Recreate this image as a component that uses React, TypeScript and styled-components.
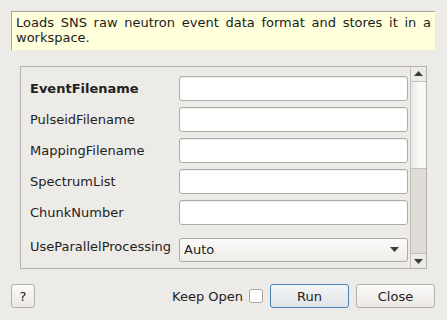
import styled, { createGlobalStyle } from 'styled-components';

const GlobalStyle = createGlobalStyle`
  body {
    margin: 0;
    background: #edebe7;
    font-family: 'DejaVu Sans', 'Liberation Sans', sans-serif;
    font-size: 13px;
    color: #1c1c1c;
  }
`;

const Dialog = styled.div`
  width: 447px;
  height: 320px;
  box-sizing: border-box;
  padding: 11px 12px 12px 11px;
  display: flex;
  flex-direction: column;
  background: #edebe7;
`;

const Description = styled.div`
  height: 39px;
  box-sizing: border-box;
  background: #ffffdc;
  border-top: 1px solid #a8a6a2;
  border-left: 1px solid #a8a6a2;
  padding: 3px 4px 0 4px;
  line-height: 15px;
  text-align: justify;
`;

const Frame = styled.div`
  margin: 16px 8px 0 9px;
  height: 204px;
  box-sizing: border-box;
  border: 1px solid #b5b2ad;
  display: flex;
`;

const Form = styled.div`
  flex: 1;
  display: grid;
  grid-template-columns: 149px 1fr;
  grid-auto-rows: 25px;
  row-gap: 6px;
  padding: 9px 2px 0 9px;
  align-content: start;
`;

const Label = styled.div<{ $bold?: boolean; $gap?: boolean }>`
  display: flex;
  align-items: center;
  font-weight: ${(p) => (p.$bold ? 'bold' : 'normal')};
  margin-top: ${(p) => (p.$gap ? '7px' : '0')};
  color: #222;
`;

const TextBox = styled.div`
  border: 1px solid #aeaba6;
  border-radius: 3px;
  background: #fff;
  box-shadow: inset 0 1px 0 #f0efed;
`;

const Combo = styled.div`
  margin-top: 7px;
  height: 24px;
  box-sizing: border-box;
  border: 1px solid #aeaba6;
  border-radius: 3px;
  background: linear-gradient(#fbfaf9, #efede9);
  display: flex;
  align-items: center;
  justify-content: space-between;
  padding: 0 8px 0 4px;
`;

const Arrow = styled.svg`
  display: block;
`;

const ScrollBar = styled.div`
  width: 15px;
  display: flex;
  flex-direction: column;
  border-left: 1px solid #c3c0bb;
  background: #e0ddd8;
`;

const ScrollButton = styled.div`
  height: 14px;
  display: flex;
  align-items: center;
  justify-content: center;
  background: #edebe7;
  border-bottom: 1px solid #c3c0bb;
  &:last-child {
    border-bottom: none;
    border-top: 1px solid #c3c0bb;
    margin-top: auto;
  }
`;

const Handle = styled.div`
  height: 86px;
  background: linear-gradient(90deg, #e9e7e4, #fbfbfa 60%, #f6f5f3);
  border-bottom: 1px solid #c3c0bb;
`;

const Footer = styled.div`
  margin-top: 15px;
  display: flex;
  align-items: center;
  height: 24px;
  gap: 7px;
`;

const Button = styled.div<{ $primary?: boolean; $w: number }>`
  width: ${(p) => p.$w}px;
  height: 24px;
  box-sizing: border-box;
  border: 1px solid ${(p) => (p.$primary ? '#4a83b4' : '#b3afaa')};
  border-radius: 3px;
  background: ${(p) =>
    p.$primary ? 'linear-gradient(#f3f5f7, #dfe4e8)' : 'linear-gradient(#fbfaf9, #ebe8e4)'};
  display: flex;
  align-items: center;
  justify-content: center;
  color: #222;
`;

const Spacer = styled.div`
  flex: 1;
`;

const KeepOpen = styled.div`
  display: flex;
  align-items: center;
  color: #222;
`;

const Check = styled.div`
  width: 14px;
  height: 14px;
  box-sizing: border-box;
  border: 1px solid #aeaba6;
  border-radius: 2px;
  background: #fff;
  margin-left: 6px;
`;

const fields = ['PulseidFilename', 'MappingFilename', 'SpectrumList', 'ChunkNumber'];

const Tri = ({ up }: { up?: boolean }) => (
  <Arrow width='9' height='5' viewBox='0 0 9 5'>
    <path d={up ? 'M0 5 L4.5 0 L9 5 Z' : 'M0 0 L9 0 L4.5 5 Z'} fill='#3c3c3c' />
  </Arrow>
);

export default function App() {
  return (
    <>
      <GlobalStyle />
      <Dialog>
        <Description>
          Loads SNS raw neutron event data format and stores it in a workspace.
        </Description>
        <Frame>
          <Form>
            <Label $bold>EventFilename</Label>
            <TextBox />
            {fields.map((f) => [<Label key={f}>{f}</Label>, <TextBox key={f + '-in'} />])}
            <Label $gap>UseParallelProcessing</Label>
            <Combo>
              <span>Auto</span>
              <Tri />
            </Combo>
          </Form>
          <ScrollBar>
            <ScrollButton>
              <Tri up />
            </ScrollButton>
            <Handle />
            <ScrollButton>
              <Tri />
            </ScrollButton>
          </ScrollBar>
        </Frame>
        <Footer>
          <Button $w={24}>?</Button>
          <Spacer />
          <KeepOpen>
            Keep Open
            <Check />
          </KeepOpen>
          <Button $primary $w={79}>
            Run
          </Button>
          <Button $w={79}>Close</Button>
        </Footer>
      </Dialog>
    </>
  );
}
